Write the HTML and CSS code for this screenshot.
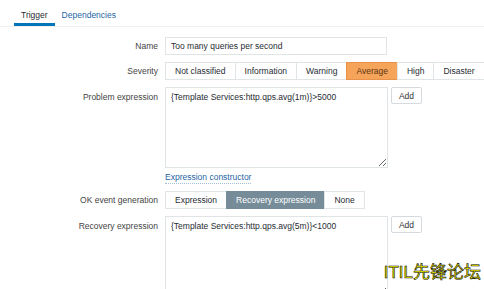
FILE: index.html
```html
<!DOCTYPE html>
<html lang="en">
<head>
    <meta charset="UTF-8">
    <title>Trigger</title>
    <link rel="stylesheet" href="styles.css">
</head>
<body>
    <div class="tabs">
        <a class="tab active">Trigger</a>
        <a class="tab">Dependencies</a>
    </div>

    <form class="trigger-form">
        <label class="form-label">Name</label>
        <div class="form-field">
            <input type="text" class="text-input" value="Too many queries per second">
        </div>

        <label class="form-label">Severity</label>
        <div class="form-field">
            <div class="segmented">
                <span class="seg">Not classified</span>
                <span class="seg">Information</span>
                <span class="seg">Warning</span>
                <span class="seg seg-average">Average</span>
                <span class="seg">High</span>
                <span class="seg">Disaster</span>
            </div>
        </div>

        <label class="form-label label-top">Problem expression</label>
        <div class="form-field">
            <div class="expr-row">
                <textarea class="expr-input" spellcheck="false">{Template Services:http.qps.avg(1m)}>5000</textarea>
                <button type="button" class="btn-add">Add</button>
            </div>
            <a class="link">Expression constructor</a>
        </div>

        <label class="form-label">OK event generation</label>
        <div class="form-field">
            <div class="segmented">
                <span class="seg">Expression</span>
                <span class="seg seg-selected">Recovery expression</span>
                <span class="seg">None</span>
            </div>
        </div>

        <label class="form-label label-top">Recovery expression</label>
        <div class="form-field">
            <div class="expr-row">
                <textarea class="expr-input" spellcheck="false">{Template Services:http.qps.avg(5m)}<1000</textarea>
                <button type="button" class="btn-add">Add</button>
            </div>
        </div>
    </form>

    <div class="watermark">ITIL先锋论坛</div>
</body>
</html>
```

FILE: styles.css
```css
* {
    margin: 0;
    padding: 0;
    box-sizing: border-box;
}

body {
    font-family: "Liberation Sans", Arial, sans-serif;
    font-size: 8.5px;
    color: #333;
    background: #fff;
    width: 484px;
    height: 289px;
    overflow: hidden;
    position: relative;
}

.tabs {
    display: flex;
    height: 27px;
    padding-left: 14px;
    border-bottom: 1px solid #eef0f1;
}

.tab {
    padding: 10px 7px 3px;
    line-height: 10px;
    color: #1f65a6;
    border-bottom: 3px solid transparent;
}

.tab.active {
    color: #1f2c33;
    border-bottom-color: #0275b8;
}

.trigger-form {
    display: grid;
    grid-template-columns: 158px 1fr;
    column-gap: 7px;
    row-gap: 7px;
    padding-top: 10px;
}

.form-label {
    text-align: right;
    color: #444;
    line-height: 18px;
    white-space: nowrap;
}

.label-top {
    line-height: 20px;
}

.form-field {
    display: flex;
    flex-direction: column;
    align-items: flex-start;
    min-width: 0;
}

.text-input {
    width: 222px;
    height: 18px;
    border: 1px solid #dfe4e7;
    padding: 0 5px;
    font: inherit;
    color: #1f2c33;
}

.segmented {
    display: flex;
}

.seg {
    flex-shrink: 0;
    white-space: nowrap;
    height: 18px;
    line-height: 16px;
    padding: 0 9px;
    border: 1px solid #dfe4e7;
    margin-left: -1px;
    color: #1f2c33;
    background: #fff;
}

.seg:first-child {
    margin-left: 0;
}

.seg-average {
    background: #f7a45b;
    border-color: #e8914a;
    color: #5a3410;
}

.seg-selected {
    background: #768d99;
    border-color: #768d99;
    color: #fff;
}

.expr-row {
    display: flex;
    align-items: flex-start;
    gap: 3px;
}

.expr-input {
    width: 223px;
    height: 81px;
    border: 1px solid #dfe4e7;
    padding: 4px 5px;
    font: inherit;
    color: #1f2c33;
    resize: vertical;
}

.btn-add {
    width: 31px;
    height: 17px;
    border: 1px solid #d4dadd;
    border-radius: 2px;
    background: #fff;
    font: inherit;
    color: #333;
}

.link {
    margin-top: 3px;
    color: #1f65a6;
    line-height: 12px;
    border-bottom: 1px dotted #9fbfd9;
}

.watermark {
    position: absolute;
    right: 3px;
    top: 262px;
    font-family: "Liberation Sans", "Noto Sans CJK SC", sans-serif;
    font-size: 17px;
    line-height: 22px;
    color: #ffff00;
    -webkit-text-stroke: 0.6px #000;
}
```
